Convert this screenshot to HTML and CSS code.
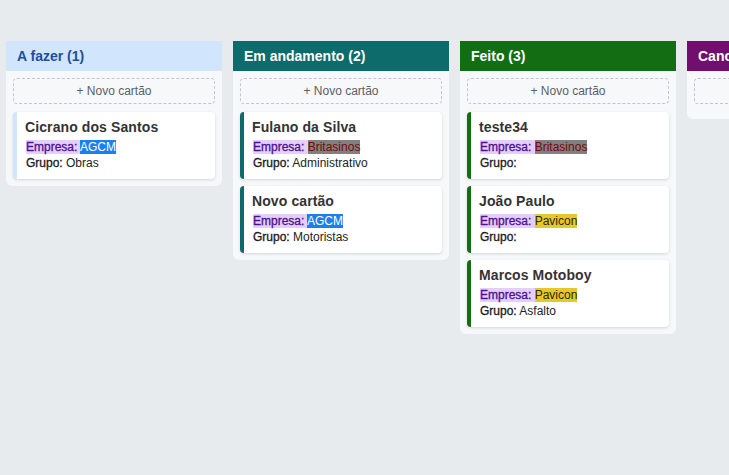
FILE: index.html
```html
<!DOCTYPE html>
<html lang="pt-BR">
<head>
<meta charset="utf-8">
<title>Quadro</title>
<link rel="stylesheet" href="styles.css">
</head>
<body>
<div class="board">
  <section class="column">
    <header class="col-head head-todo">A fazer (1)</header>
    <div class="col-body">
      <button class="add-card">+ Novo cartão</button>
      <div class="card-list">
        <article class="card border-todo">
          <h3 class="card-title">Cicrano dos Santos</h3>
          <div class="card-line"><span class="lbl-empresa">Empresa: </span><span class="tag tag-agcm">AGCM</span></div>
          <div class="card-line"><span class="lbl-grupo">Grupo:</span> Obras</div>
        </article>
      </div>
    </div>
  </section>

  <section class="column">
    <header class="col-head head-doing">Em andamento (2)</header>
    <div class="col-body">
      <button class="add-card">+ Novo cartão</button>
      <div class="card-list">
        <article class="card border-doing">
          <h3 class="card-title">Fulano da Silva</h3>
          <div class="card-line"><span class="lbl-empresa">Empresa: </span><span class="tag tag-brit">Britasinos</span></div>
          <div class="card-line"><span class="lbl-grupo">Grupo:</span> Administrativo</div>
        </article>
        <article class="card border-doing">
          <h3 class="card-title">Novo cartão</h3>
          <div class="card-line"><span class="lbl-empresa">Empresa: </span><span class="tag tag-agcm">AGCM</span></div>
          <div class="card-line"><span class="lbl-grupo">Grupo:</span> Motoristas</div>
        </article>
      </div>
    </div>
  </section>

  <section class="column">
    <header class="col-head head-done">Feito (3)</header>
    <div class="col-body">
      <button class="add-card">+ Novo cartão</button>
      <div class="card-list">
        <article class="card border-done">
          <h3 class="card-title">teste34</h3>
          <div class="card-line"><span class="lbl-empresa">Empresa: </span><span class="tag tag-brit">Britasinos</span></div>
          <div class="card-line"><span class="lbl-grupo">Grupo:</span></div>
        </article>
        <article class="card border-done">
          <h3 class="card-title">João Paulo</h3>
          <div class="card-line"><span class="lbl-empresa">Empresa: </span><span class="tag tag-pavicon">Pavicon</span></div>
          <div class="card-line"><span class="lbl-grupo">Grupo:</span></div>
        </article>
        <article class="card border-done">
          <h3 class="card-title">Marcos Motoboy</h3>
          <div class="card-line"><span class="lbl-empresa">Empresa: </span><span class="tag tag-pavicon">Pavicon</span></div>
          <div class="card-line"><span class="lbl-grupo">Grupo:</span> Asfalto</div>
        </article>
      </div>
    </div>
  </section>

  <section class="column">
    <header class="col-head head-cancel">Cancelado (0)</header>
    <div class="col-body">
      <button class="add-card">+ Novo cartão</button>
      <div class="card-list"></div>
    </div>
  </section>
</div>
</body>
</html>
```

FILE: styles.css
```css
html, body {
  margin: 0;
  padding: 0;
  background: #e8ebee;
  font-family: "Liberation Sans", Arial, sans-serif;
  overflow: hidden;
}

.board {
  display: flex;
  align-items: flex-start;
  gap: 11px;
  padding: 41px 6px;
  width: max-content;
}

.column {
  width: 216px;
  flex: 0 0 216px;
  background: #f6f8fa;
  border-radius: 0 0 6px 6px;
}

.col-head {
  height: 30px;
  display: flex;
  align-items: center;
  padding: 0 11px;
  font-size: 14px;
  font-weight: bold;
  color: #ffffff;
}

.head-todo { background: #d1e5fc; color: #1c4f9c; }
.head-doing { background: #0e6b6b; }
.head-done { background: #136d13; }
.head-cancel { background: #710e6e; }

.col-body {
  display: flex;
  flex-direction: column;
  padding: 7px;
}

.add-card {
  height: 26px;
  width: 100%;
  border: 1px dashed #c3c6ca;
  border-radius: 4px;
  background: transparent;
  font-family: "Liberation Sans", Arial, sans-serif;
  font-size: 12px;
  line-height: 24px;
  color: #5a5f66;
  padding: 0;
  margin-bottom: 8px;
}

.card-list {
  display: flex;
  flex-direction: column;
  gap: 7px;
}

.card {
  background: #ffffff;
  border-radius: 4px;
  border-left: 4px solid transparent;
  box-shadow: 0 1px 3px rgba(0, 0, 0, 0.14);
  padding: 6px 8px 8px 7px;
  color: #222;
}

.border-todo { border-left-color: #d1e5fc; }
.border-doing { border-left-color: #0e6b6b; }
.border-done { border-left-color: #136d13; }

.card-title {
  margin: 0 0 3px 1px;
  font-size: 14px;
  line-height: 18px;
  font-weight: bold;
  color: #333;
  letter-spacing: 0.1px;
}

.card-line {
  font-size: 12px;
  line-height: 16px;
  margin-left: 2px;
  color: #222;
}

.lbl-empresa {
  background: #e4cefa;
  color: #4e108f;
  -webkit-text-stroke: 0.3px #4e108f;
  white-space: pre;
}

.lbl-grupo {
  color: #1a1a1a;
  -webkit-text-stroke: 0.3px #1a1a1a;
}

.tag-agcm { background: #1c7ff0; color: #ffffff; }
.tag-brit { background: #808080; color: #7a0909; }
.tag-pavicon { background: #e6c82a; color: #2a2a00; }
```
